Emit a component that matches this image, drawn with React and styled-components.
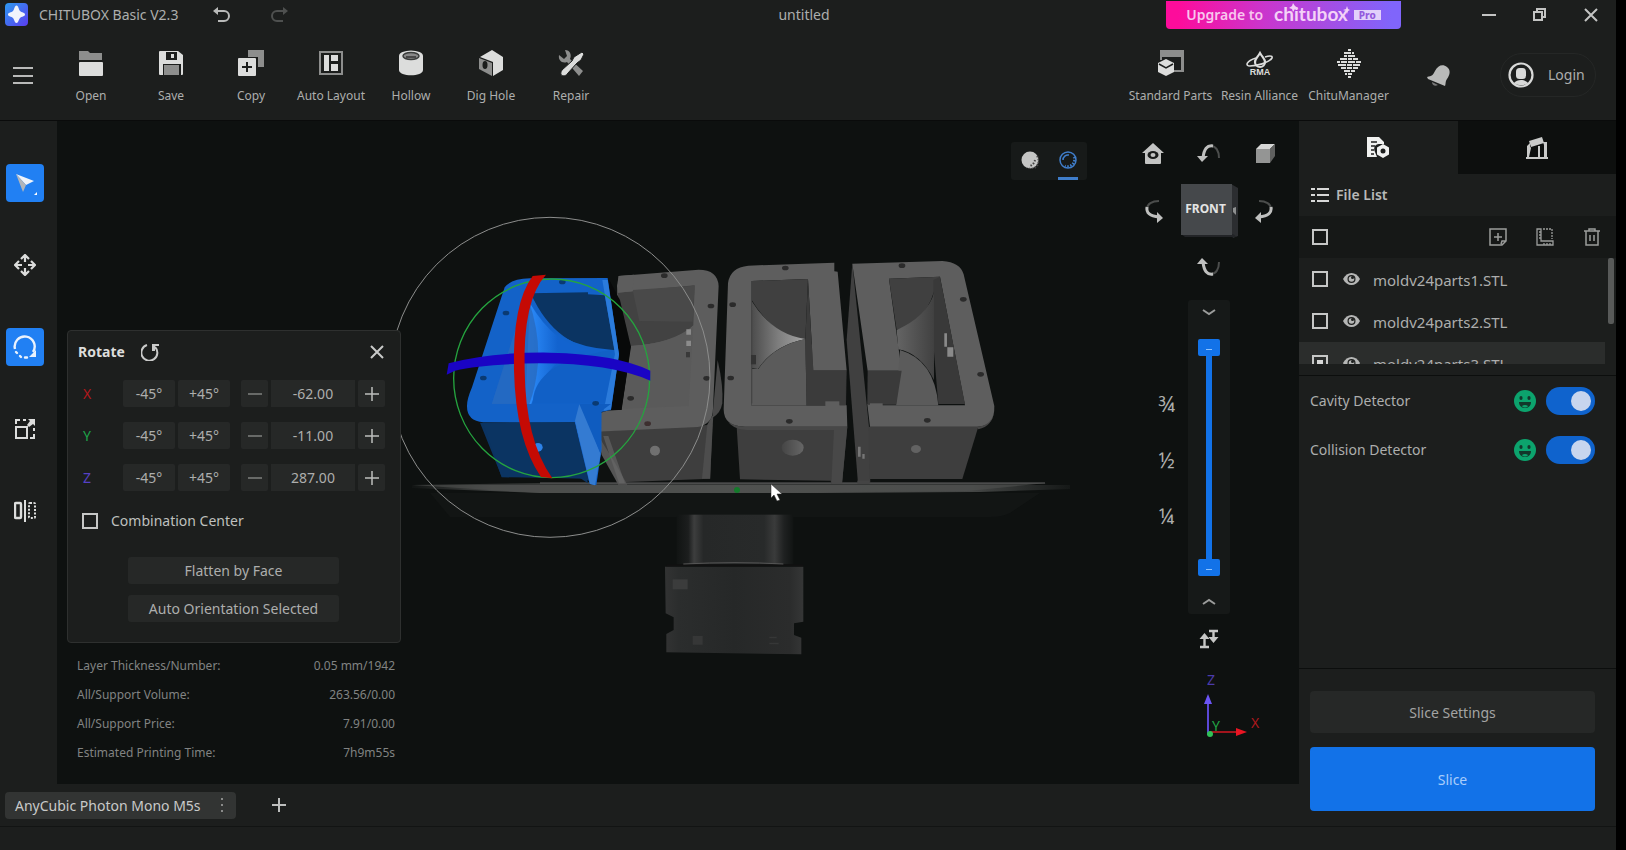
import React, { useState } from "react";
import styled, { createGlobalStyle, css } from "styled-components";

const GlobalStyle = createGlobalStyle`
  *, *::before, *::after { box-sizing: border-box; }
  body { margin: 0; background: #000; }
  body, button, input { font-family: "Noto Sans", "Open Sans", sans-serif; }
  button { border: 0; padding: 0; margin: 0; background: none; color: inherit; cursor: pointer; }
  ul, dl, dd, h2, h3, p { margin: 0; padding: 0; list-style: none; }
  svg { display: block; flex: none; }
`;

const c = {
  panel: "#1c1e1d",
  dark: "#0e1110",
  control: "#262827",
  text: "#adaead",
  bright: "#d4d5d4",
  blue: "#1272e8",
};

const Frame = styled.div`
  min-height: 100vh;
  padding-right: 10px;
  display: flex;
`;

const Window = styled.div`
  flex: 1;
  min-width: 0;
  display: flex;
  flex-direction: column;
  background: ${c.panel};
  color: ${c.text};
  font-size: 14px;
  line-height: 20px;
`;

const TitleBar = styled.header`
  height: 29px;
  display: grid;
  grid-template-columns: minmax(0, 1fr) auto minmax(0, 1fr);
  align-items: center;
`;

const TitleLeft = styled.div`
  display: flex;
  align-items: center;
  padding-left: 5px;
`;

const AppName = styled.span`
  margin-left: 11px;
  width: 173px;
  white-space: nowrap;
`;

const HistoryButton = styled.button`
  width: 20px;
  height: 20px;
  margin-right: 37px;
  color: ${(p) => (p.disabled ? "#4e504f" : "#b9bab9")};
`;

const DocTitle = styled.span`
  padding-right: 8px;
`;

const TitleRight = styled.div`
  display: flex;
  align-items: center;
  justify-content: flex-end;
`;

const Upgrade = styled.a`
  width: 235px;
  height: 28px;
  margin-right: 62px;
  border-radius: 0 0 4px 4px;
  background: linear-gradient(90deg, #fd0c9b 5%, #c936cd 42%, #8065fb 96%);
  display: flex;
  align-items: center;
  justify-content: center;
  gap: 11px;
  color: #f8c6ee;
  font-weight: 600;
  text-decoration: none;
`;

const Brand = styled.span`
  position: relative;
  display: flex;
  align-items: center;
  gap: 6px;
  color: #f4d2f7;
  font: 700 19px/20px Lato, sans-serif;
  padding-bottom: 2px;
`;

const Sparkles = styled.svg`
  position: absolute;
  left: 0;
  top: -1px;
`;

const ProBadge = styled.span`
  width: 27px;
  height: 10px;
  margin-top: 3px;
  background: #e2d0fb;
  color: #9459de;
  font: 800 10px/10px "Noto Sans", sans-serif;
  text-align: center;
`;

const WindowButton = styled.button`
  width: 51px;
  height: 28px;
  display: grid;
  place-items: center;
  color: #c3c4c3;
`;

const ToolBar = styled.nav`
  height: 92px;
  display: flex;
  align-items: center;
  padding-right: 20px;
  border-bottom: 1px solid #0a0b0b;
`;

const MenuButton = styled.button`
  width: 22px;
  height: 22px;
  margin: 0 17px 0 12px;
  color: #b9bab9;
`;

const ToolButton = styled.button`
  width: ${(p) => (p.$wide ? 89 : 80)}px;
  padding-top: 5px;
  display: flex;
  flex-direction: column;
  align-items: center;
  gap: 11px;
  font-size: 12px;
  line-height: 18px;
  white-space: nowrap;
`;

const Spacer = styled.div`
  flex: 1;
`;

const BellButton = styled.button`
  width: 28px;
  height: 28px;
  margin: 0 48px 0 31px;
`;

const LoginButton = styled.button`
  width: 96px;
  height: 44px;
  border: 1px solid #252726;
  border-radius: 22px;
  display: flex;
  align-items: center;
  gap: 14px;
  padding-left: 7px;
  font-size: 14px;
`;

const Body = styled.div`
  flex: 1;
  display: grid;
  grid-template-columns: minmax(0, 1fr) 317px;
`;

const Main = styled.main`
  display: flex;
  flex-direction: column;
`;

const Workspace = styled.div`
  flex: 1;
  display: flex;
`;

const SideBar = styled.nav`
  width: 57px;
  padding: 43px 0 0 6px;
  display: flex;
  flex-direction: column;
  gap: 44px;
`;

const SideButton = styled.button`
  width: 38px;
  height: 38px;
  border-radius: 4px;
  display: grid;
  place-items: center;
  color: #dcdddc;
  background: ${(p) => (p.$active ? "#2180f3" : "transparent")};
`;

const Viewport = styled.section`
  position: relative;
  flex: 1;
  min-width: 0;
  min-height: 663px;
  background: ${c.dark};
`;

const Scene = styled.svg`
  position: absolute;
  inset: 0;
  width: 100%;
  height: 100%;
`;

const RotatePanel = styled.form`
  position: absolute;
  left: 10px;
  bottom: 141px;
  width: 334px;
  height: 313px;
  padding: 10px 13px 0 10px;
  border: 1px solid #2e302f;
  border-radius: 4px;
  background: ${c.panel};
`;

const PanelHead = styled.div`
  display: flex;
  align-items: center;
  height: 22px;
  margin-bottom: 17px;
  color: #dcdddc;
`;

const PanelTitle = styled.h2`
  width: 62px;
  font-size: 14px;
  line-height: 20px;
  font-weight: 700;
`;

const IconButton = styled.button`
  display: grid;
  place-items: center;
  width: 20px;
  height: 20px;
  color: ${(p) => p.$color || "#c9cac9"};
`;

const AxisRow = styled.div`
  display: grid;
  grid-template-columns: 42px 52px 52px auto;
  column-gap: 3px;
  height: 27px;
  margin-bottom: 15px;
  align-items: stretch;
`;

const AxisLabel = styled.label`
  padding-left: 5px;
  line-height: 27px;
  font-size: 14px;
  color: ${(p) => p.$color};
`;

const StepButton = styled.button`
  border-radius: 2px;
  background: ${c.control};
  font-size: 14px;
  display: grid;
  place-items: center;
`;

const Stepper = styled.div`
  margin-left: 8px;
  display: grid;
  grid-template-columns: 27px 84px 27px;
  column-gap: 3px;
`;

const ValueInput = styled.input`
  width: 100%;
  border: 0;
  padding: 0;
  background: ${c.control};
  color: ${c.text};
  font-size: 14px;
  text-align: center;
`;

const CheckLabel = styled.label`
  display: flex;
  align-items: center;
  gap: 13px;
  margin: 20px 0 26px 4px;
  height: 20px;
  color: #bfc0bf;
`;

const Check = styled.input.attrs({ type: "checkbox" })`
  appearance: none;
  flex: none;
  width: 16px;
  height: 16px;
  margin: 0;
  border: 2px solid #c6c7c6;
  display: grid;
  place-items: center;

  &:checked::before {
    content: "";
    width: 6px;
    height: 6px;
    background: #d8d9d8;
  }
`;

const PanelButton = styled.button`
  display: block;
  width: 211px;
  height: 27px;
  margin: 0 0 11px 50px;
  border-radius: 3px;
  background: ${c.control};
  font-size: 14px;
`;

const Stats = styled.dl`
  position: absolute;
  left: 20px;
  bottom: 17px;
  width: 318px;
`;

const Stat = styled.div`
  display: flex;
  justify-content: space-between;
  height: 29px;
  font-size: 12px;
  line-height: 29px;
  color: #818382;
`;

const ShadeToggle = styled.div`
  position: absolute;
  right: 212px;
  top: 21px;
  width: 76px;
  height: 38px;
  border-radius: 3px;
  background: #171a19;
  display: flex;
`;

const ShadeButton = styled.button`
  flex: 1;
  display: grid;
  place-items: center;
  border-bottom: 3px solid transparent;
  ${(p) =>
    p.$active &&
    css`
      background: linear-gradient(#3f7dca, #3f7dca) center bottom / 20px 3px no-repeat border-box;
    `}
`;

const ViewControls = styled.div`
  position: absolute;
  right: 18px;
  top: 17px;
  display: grid;
  grid-template-columns: 32px 80px 32px;
  grid-template-rows: 32px 82px 28px;
  place-items: center;
`;

const ViewButton = styled.button`
  width: 24px;
  height: 24px;
`;

const FrontCube = styled.button`
  position: relative;
  width: 57px;
  height: 54px;
`;

const CubeText = styled.span`
  position: absolute;
  left: 0;
  top: 15px;
  width: 50px;
  color: #e3e4e3;
  font: 700 12px/20px "Noto Sans", sans-serif;
  text-align: center;
`;

const LayerSlider = styled.div`
  position: absolute;
  right: 69px;
  top: 179px;
  width: 42px;
  height: 314px;
  border-radius: 3px;
  background: #161918;
  display: flex;
  flex-direction: column;
  align-items: center;
  justify-content: space-between;
`;

const ChevronButton = styled.button`
  width: 24px;
  height: 24px;
  display: grid;
  place-items: center;
`;

const Track = styled.div`
  position: relative;
  width: 22px;
  height: 237px;
  background: linear-gradient(${c.blue}, ${c.blue}) center / 6px 100% no-repeat;
`;

const thumb = css`
  appearance: none;
  width: 22px;
  height: 17px;
  border: 0;
  border-radius: 2px;
  background: linear-gradient(#8fc3ff, #8fc3ff) center 10px / 6px 1px no-repeat, ${c.blue};
  pointer-events: auto;
`;

const Range = styled.input.attrs({ type: "range" })`
  position: absolute;
  inset: 0;
  appearance: none;
  width: 22px;
  height: 237px;
  margin: 0;
  background: transparent;
  writing-mode: vertical-lr;
  direction: rtl;
  pointer-events: none;

  &::-webkit-slider-thumb { ${thumb} }
`;

const Fractions = styled.div`
  position: absolute;
  right: 124px;
  top: 271px;
  display: flex;
  flex-direction: column;
  gap: 32px;
  font-size: 21px;
  line-height: 24px;
`;

const SplitButton = styled.button`
  position: absolute;
  right: 80px;
  top: 508px;
  width: 20px;
  height: 20px;
`;

const AxisGizmo = styled.svg`
  position: absolute;
  right: 32px;
  top: 548px;
  font: 14px "Noto Sans", sans-serif;
`;

const TabBar = styled.div`
  height: 42px;
  padding-left: 5px;
  display: flex;
  align-items: center;
  gap: 33px;
`;

const PrinterTab = styled.button`
  width: 231px;
  height: 27px;
  padding: 0 12px 0 10px;
  border-radius: 4px;
  background: #323433;
  color: #c9cac9;
  font-size: 14px;
  display: flex;
  align-items: center;
  justify-content: space-between;
`;

const StatusBar = styled.footer`
  height: 24px;
  border-top: 1px solid #121413;
`;

const Side = styled.aside`
  display: flex;
  flex-direction: column;
  min-width: 0;
`;

const SideTabs = styled.div`
  display: grid;
  grid-template-columns: 1fr 1fr;
  height: 53px;
`;

const SideTab = styled.button`
  display: grid;
  place-items: center;
  background: ${(p) => (p.$active ? c.panel : "#0d0f0e")};
`;

const ListHead = styled.div`
  height: 42px;
  padding-left: 12px;
  display: flex;
  align-items: center;
  gap: 7px;
`;

const ListTitle = styled.h3`
  font-size: 14px;
  font-weight: 600;
  color: #b8b9b8;
`;

const ListTools = styled.div`
  height: 42px;
  padding: 0 14px 0 13px;
  background: #161817;
  display: flex;
  align-items: center;
  gap: 27px;
`;

const FileArea = styled.div`
  height: 106px;
  overflow: hidden;
  display: flex;
  gap: 3px;
  padding-right: 2px;
`;

const FileRows = styled.ul`
  flex: 1;
`;

const FileRow = styled.li`
  height: 42px;
  padding-left: 13px;
  display: flex;
  align-items: center;
  gap: 15px;
  background: ${(p) => (p.$selected ? "#2b2d2c" : "transparent")};
`;

const FileName = styled.label`
  margin-left: -2px;
  padding-top: 2px;
  font-size: 15px;
`;

const ScrollThumb = styled.div`
  width: 6px;
  height: 66px;
  border-radius: 2px;
  background: #585a59;
`;

const Detectors = styled.div`
  flex: 1;
  margin-top: 11px;
  padding: 11px 21px 0 11px;
  border-top: 1px solid #0c0e0d;
`;

const Detector = styled.div`
  height: 28px;
  margin-bottom: 21px;
  display: flex;
  align-items: center;
  gap: 10px;
`;

const DetectorLabel = styled.label`
  flex: 1;
`;

const Switch = styled.input.attrs({ type: "checkbox", role: "switch" })`
  appearance: none;
  width: 49px;
  height: 28px;
  margin: 0;
  padding: 0 4px;
  border-radius: 14px;
  background: #0f63cd;
  display: flex;
  align-items: center;

  &::before {
    content: "";
    width: 20px;
    height: 20px;
    border-radius: 50%;
    background: #c7d5ee;
  }
  &:checked { justify-content: flex-end; }
`;

const Actions = styled.div`
  height: 158px;
  padding: 22px 21px 0 11px;
  border-top: 1px solid #0c0e0d;
  display: flex;
  flex-direction: column;
  gap: 14px;
`;

const ActionButton = styled.button`
  height: ${(p) => (p.$primary ? 64 : 42)}px;
  border-radius: 4px;
  background: ${(p) => (p.$primary ? c.blue : c.control)};
  color: ${(p) => (p.$primary ? "#a9cdfb" : "#a3a4a3")};
  font-size: 14px;
`;

const L = "#dcdddc";
const G = "#8d8e8d";

const toolIcons = {
  Open: (
    <>
      <path d="M1 1h9l2 2h12v7H1z" fill={G} />
      <rect x="1" y="12" width="24" height="14" rx="1" fill={L} />
    </>
  ),
  Save: (
    <>
      <path d="M2 1h18l5 4v19a1 1 0 0 1-1 1h-1V14H5v11H2a1 1 0 0 1-1-1V2a1 1 0 0 1 1-1zM8 2v8h11V2z" fill={L} fillRule="evenodd" />
      <rect x="9" y="3" width="9" height="6" fill="#1c1e1d" />
      <rect x="13" y="4" width="3" height="4" fill={L} />
      <rect x="6" y="15" width="15" height="10" fill={G} />
    </>
  ),
  Copy: (
    <>
      <path d="M10 0h16v17h-6V7H10z" fill={G} />
      <rect x="0" y="8" width="18" height="18" rx="1" fill={L} />
      <path d="M9 12v10M4 17h10" stroke="#1c1e1d" strokeWidth="2" />
    </>
  ),
  "Auto Layout": (
    <>
      <rect x="2" y="2" width="22" height="22" fill="none" stroke={G} strokeWidth="2" />
      <path d="M6 5h5v16H6zM13 5h7v6h-7zM13 14h7v7h-7z" fill={L} />
    </>
  ),
  Hollow: (
    <>
      <path d="M1 6v14c0 7 24 7 24 0V6z" fill={L} />
      <ellipse cx="13" cy="6" rx="12" ry="5.5" fill={L} />
      <ellipse cx="13" cy="6" rx="8" ry="3.5" fill="#888" stroke="#3a3c3b" strokeWidth="1.5" />
      <path d="M8 7h10" stroke="#333" strokeWidth="1.5" />
    </>
  ),
  "Dig Hole": (
    <>
      <path d="M2 7l12-7 11 7v13l-10 6V12z" fill={L} />
      <path d="M1 8l13 5v13L1 19z" fill={G} />
      <ellipse cx="7" cy="15" rx="2.5" ry="4" fill="#1c1e1d" />
    </>
  ),
  Repair: (
    <>
      <path d="M7 0C12 0 14 5 12 9l13 12-4 5L9 12C4 14 0 10 1 5l5 4 3-3z" fill={G} />
      <path d="M24 2l2 2-3 6-4 3-9 10c-3 5-10 3-6-3l10-9 2-4z" fill={L} stroke="#1c1e1d" />
    </>
  ),
  "Standard Parts": (
    <>
      <path d="M2 0h24v22H15v-2h8V7H4v3H2z" fill={G} />
      <path d="M8 9l8 4v9l-8 4-8-4v-9z" fill={L} />
      <path d="M1 14l7 4 7-4" fill="none" stroke="#1c1e1d" strokeWidth="1.5" />
    </>
  ),
  "Resin Alliance": (
    <>
      <path d="M13 3C10 8 8 9 8 12a5 5 0 0 0 10 0c0-3-2-4-5-9z" fill="none" stroke={L} strokeWidth="2.2" />
      <path d="M9 8C-1 11-2 16 3 16c6 0 19-3 22-8 1-3-4-2-7-1" fill="none" stroke={L} strokeWidth="1.6" />
      <text x="13" y="25" textAnchor="middle" fontSize="9" fontWeight="900" fontFamily="Liberation Sans, sans-serif" fill={L}>RMA</text>
    </>
  ),
  ChituManager: (
    <path
      d="M12 0h3M8 3h7M16 3h2M8 6h3M12 6h7M4 9h7M12 9h4M17 9h5M1 12h3M5 12h6M12 12h7M20 12h5M2 15h8M11 15h5M17 15h7M5 18h5M11 18h5M17 18h5M8 21h6M15 21h4M9 24h2M12 24h4M12 27h3"
      stroke={L}
      strokeWidth="2"
    />
  ),
};

const ToolIcon = ({ name }) => (
  <svg width="26" height="26" viewBox="0 0 26 26" overflow="visible" aria-hidden="true">
    {toolIcons[name]}
  </svg>
);

const Tool = ({ name, wide }) => (
  <ToolButton type="button" $wide={wide}>
    <ToolIcon name={name} />
    {name}
  </ToolButton>
);

const UndoIcon = ({ flip }) => (
  <svg width="20" height="20" viewBox="0 0 20 20">
    <g transform={flip ? "translate(20 0) scale(-1 1)" : undefined}>
      <path d="M4 6h8a5 5 0 0 1 0 10H6" fill="none" stroke="currentColor" strokeWidth="2" />
      <path d="M1 6l5-4v8z" fill="currentColor" />
    </g>
  </svg>
);

const Cross = ({ size = 14 }) => (
  <svg width={size} height={size} viewBox="0 0 14 14">
    <path d="M1 1l12 12M13 1L1 13" stroke="currentColor" strokeWidth="2" />
  </svg>
);

const Plus = ({ width = 2 }) => (
  <svg width="14" height="14" viewBox="0 0 14 14">
    <path d="M7 0v14M0 7h14" stroke="#bdbebd" strokeWidth={width} />
  </svg>
);

const sideIcons = [
  ["Select", true, (
    <svg width="28" height="28" viewBox="0 0 28 28" key="i">
      <path d="M5 5l18 7-8 4z" fill="#eef3fa" />
      <path d="M5 5l10 11-3 7z" fill="#b1b5ba" />
      <path d="M26 23v3h-3z" fill="#fff" />
    </svg>
  )],
  ["Move", false, (
    <svg width="22" height="22" viewBox="0 0 22 22" key="i">
      <path
        d="M7 5l4-4 4 4M7 17l4 4 4-4M5 7l-4 4 4 4M17 7l4 4-4 4M11 2v6M11 14v6M2 11h6M14 11h6"
        fill="none"
        stroke="currentColor"
        strokeWidth="2.2"
      />
    </svg>
  )],
  ["Rotate", true, (
    <svg width="24" height="24" viewBox="0 0 24 24" key="i">
      <path d="M2 14A10 10 0 1 1 20 17" fill="none" stroke="#eaf2fd" strokeWidth="2.400" />
      <path d="M3 17l1 1M7 21l1 1M12 22.500h2" stroke="#eaf2fd" strokeWidth="2.400" strokeLinecap="round" />
      <path d="M16 15l6 8M23 15v7h-7z" fill="#eaf2fd" />
    </svg>
  )],
  ["Scale", false, (
    <svg width="20" height="20" viewBox="0 0 20 20" key="i">
      <rect x="1" y="8" width="11" height="11" fill="none" stroke="currentColor" strokeWidth="2" />
      <path d="M1 5V1h4M8 1h3M19 9v3M19 15v4h-4" fill="none" stroke="currentColor" strokeWidth="2" />
      <path d="M13 0h7v7l-2-2-4 3-2-2 3-4z" fill="currentColor" />
    </svg>
  )],
  ["Mirror", false, (
    <svg width="22" height="22" viewBox="0 0 22 22" key="i">
      <rect x="1" y="3" width="6" height="15" rx="1" fill="none" stroke="currentColor" strokeWidth="2.400" />
      <path d="M11 0v22" stroke="currentColor" strokeWidth="2" />
      <rect x="15" y="3" width="6" height="15" rx="1" fill="none" stroke="currentColor" strokeWidth="2" strokeDasharray="2 1.500" />
    </svg>
  )],
];

const Eye = () => (
  <svg width="17" height="12" viewBox="0 0 17 12" aria-hidden="true">
    <path d="M0 6C4-2 13-2 17 6 13 14 4 14 0 6z" fill="#b5b6b5" />
    <circle cx="8.500" cy="6" r="4" fill="#1c1e1d" />
    <circle cx="8.500" cy="6" r="2.800" fill="#b5b6b5" />
    <circle cx="9.500" cy="4.500" r="1.500" fill="#1c1e1d" />
  </svg>
);

const Smile = () => (
  <svg width="22" height="22" viewBox="0 0 22 22" aria-hidden="true">
    <circle cx="11" cy="11" r="11" fill="#0ca36d" />
    <ellipse cx="7" cy="8" rx="1.600" ry="2" fill="#12382b" />
    <ellipse cx="15" cy="8" rx="1.600" ry="2" fill="#12382b" />
    <path d="M5 12h12c0 8-12 8-12 0z" fill="#12382b" />
    <path d="M8 16c2-1.500 4-1.500 6 0-1 2-5 2-6 0z" fill="#0ca36d" />
  </svg>
);

/* Arrow that curls over the top of the cube; the other three are turned copies. */
const CurlArrow = ({ t }) => (
  <svg width="24" height="24" viewBox="0 0 24 24">
    <g transform={t}>
      <path d="M14 4c5 0 8 5 8 12" fill="none" stroke="#4b4d4c" strokeWidth="2" />
      <path d="M6 16C7 7 10 3 16 4" fill="none" stroke="#bfc0bf" strokeWidth="3" />
      <path d="M0 14h11l-6 6z" fill="#bfc0bf" />
    </g>
  </svg>
);

const Chevron = ({ up }) => (
  <svg width="14" height="8" viewBox="0 0 14 8">
    <path d={up ? "M1 6l6-4 6 4" : "M1 2l6 4 6-4"} fill="none" stroke="#9b9c9b" strokeWidth="2" />
  </svg>
);

const Hole = ({ x, y, f = "#2b2b2b" }) => <ellipse cx={x} cy={y} rx="10" ry="7" fill={f} />;

const SceneArt = () => (
  <Scene viewBox="57 121 1242 663" role="img" aria-label="Build plate with four mold parts">
    <defs>
      <linearGradient id="plate" x1="0" x2="1">
        <stop offset="0" stopColor="#111413" />
        <stop offset=".12" stopColor="#444645" />
        <stop offset=".5" stopColor="#505150" />
        <stop offset=".85" stopColor="#454746" />
        <stop offset="1" stopColor="#151817" />
      </linearGradient>
      <linearGradient id="neck" x1="0" x2="1">
        <stop offset="0" stopColor="#111413" />
        <stop offset=".1" stopColor="#1c1e1e" />
        <stop offset=".15" stopColor="#3d3e3e" />
        <stop offset=".23" stopColor="#262828" />
        <stop offset=".75" stopColor="#282a2a" />
        <stop offset=".84" stopColor="#3a3b3b" />
        <stop offset=".92" stopColor="#1f2121" />
        <stop offset="1" stopColor="#111413" />
      </linearGradient>
      <linearGradient id="base" x1="0" x2="1">
        <stop offset="0" stopColor="#323333" />
        <stop offset=".1" stopColor="#2b2d2d" />
        <stop offset=".5" stopColor="#262828" />
        <stop offset=".9" stopColor="#2b2c2c" />
        <stop offset="1" stopColor="#353636" />
      </linearGradient>
      <linearGradient id="cone" x1="0" x2="1">
        <stop offset="0" stopColor="#4c4c4c" />
        <stop offset=".5" stopColor="#7e7e7e" />
        <stop offset="1" stopColor="#a5a5a5" />
      </linearGradient>
      <linearGradient id="cone2" x1="0" x2="1">
        <stop offset="0" stopColor="#646464" />
        <stop offset="1" stopColor="#414141" />
      </linearGradient>
      <linearGradient id="coneBlue" x1="0" x2="1">
        <stop offset="0" stopColor="#2f90ff" />
        <stop offset=".5" stopColor="#1263cf" />
      </linearGradient>
      <linearGradient id="dip" x1="0" x2="1">
        <stop offset="0" stopColor="#454545" />
        <stop offset="1" stopColor="#666" />
      </linearGradient>
    </defs>

    {/* build plate and its mount */}
    <path d="M430 493h610l-30 20q-8 4-20 4H450z" fill="#121514" />
    <path d="M412 485h646l12 0v4l-90 3-160 1H540l-128-5z" fill="url(#plate)" />
    <path d="M412 485l130-2h505l-80 8-250 2H540z" fill="#505150" opacity=".6" />
    <path d="M540 483h505" stroke="#626362" />
    <g transform="translate(630 470) scale(.3333)">
      <rect x="140" y="134" width="350" height="150" fill="url(#neck)" />
      <path d="M105 290h415v165l-28 5v35l22 8v50l-405-6v-55l22-12v-38l-24-12z" fill="url(#base)" />
      <path d="M110 286h410" stroke="#111" strokeWidth="6" />
      <path d="M160 282q160-8 300 0" stroke="#555" strokeWidth="3" fill="none" />
      <path d="M128 328h45v30h-45z" fill="#3b3c3c" />
      <path d="M188 498h30v26h-30zM418 500h22v5h-22zM418 518h28v5h-28z" fill="#363737" />
    </g>

    {/* two parts on the right */}
    <g transform="translate(700 230) scale(.3333)">
      <path d="M110 590h332l-16 172h-32l-2-10-272-4z" fill="#3e3e3e" />
      <path d="M402 600l40-10-16 172h-32z" fill="#484848" />
      <path d="M316 330l124 90-2 110-118-2z" fill="#383838" />
      <path
        fillRule="evenodd"
        d="M145 107l258-9v26l10 1 27 296H340L324 147l-169 6v374h223v-13h42v12h20l2 64H135q-64 0-64-52L84 160q6-48 61-53z"
        fill="#5e5e5e"
      />
      <path d="M78 566q20 34 62 34h300v-10H135q-46-2-57-24z" fill="#484848" />
      <path d="M155 153l169-6-8 182q-96-10-161-119z" fill="#404040" />
      <path d="M155 213q62 100 161 114-96 20-142 90l-19-2z" fill="url(#cone)" />
      <path d="M175 417q46-70 141-90l4 200H155V417z" fill="#5b5b5b" />
      <path d="M316 330l8-180 16 272h99l-3 104H320z" fill="#3b3b3b" />
      <path d="M155 240v280" stroke="#454545" strokeWidth="4" />
      <rect x="153" y="375" width="15" height="28" fill="#333" />
      <path d="M376 514h42v14h-42z" fill="#5e5e5e" />
      <Hole x={256} y={114} /><Hole x={98} y={224} /><Hole x={92} y={444} /><Hole x={268} y={574} />
      <ellipse cx="278" cy="653" rx="33" ry="24" fill="url(#dip)" />

      <path d="M457 100l50 490 4 170h-37L440 330z" fill="#404040" />
      <path d="M505 590h330l-48 157H508z" fill="#3e3e3e" />
      <path
        fillRule="evenodd"
        d="M457 101l270-8q54 4 64 40l92 395q2 62-50 62H510l-8-68h45v4h248L720 140l-153 6 38 276H503z"
        fill="#5e5e5e"
      />
      <path d="M567 146l153-6-12 20q-20 110-118 140z" fill="#404040" />
      <path d="M700 150l20-10 75 382h-80l-15-180z" fill="#393939" />
      <path d="M590 300q90-40 112-110v260q-40-80-107-92z" fill="url(#cone2)" />
      <path d="M600 360q104 30 115 166H588z" fill="#5b5b5b" />
      <path d="M503 422h102l-16 102H502z" fill="#3a3a3a" />
      <path d="M510 520h38v8h-38z" fill="#5e5e5e" />
      <path d="M835 598q44-8 48-60-4 50-52 52z" fill="#454545" />
      <Hole x={606} y={107} /><Hole x={790} y={208} /><Hole x={842} y={433} /><Hole x={682} y={571} />
      <ellipse cx="648" cy="657" rx="15" ry="12" fill="#626262" />
      <path d="M733 310h8v40h-8zM742 352h18v28h-18z" fill="#8a8a8a" />
      <path d="M474 650h8v30h-8zM487 672h7v14h-7z" fill="#777" />
      <path d="M472 752h36v10h-36z" fill="#444" />
    </g>

    {/* selected part and its neighbour */}
    <g transform="translate(390 200) scale(.3333)">
      <path d="M983 480q18 80 14 130-5 30-30 44z" fill="#494949" />
      <path d="M617 694l350-20-6 162-250 10-26 8z" fill="#3e3e3e" />
      <path d="M965 650l5-4-10 190-24 0 16-162z" fill="#4d4d4d" />
      <path d="M686 228l240-19q58 0 60 50l-17 367q0 46-46 55l-307 14 4-45q10-22 75-20l28-190-43-140z" fill="#5d5d5d" />
      <path d="M683 278l45-4 186-18-4 120q-50 54-188 62l-26-90z" fill="#424242" />
      <path d="M728 270l186-13-6 108-160-2z" fill="#494949" />
      <path d="M683 278l-2-20 5-30 46-4-4 50z" fill="#5d5d5d" />
      <path d="M722 438q120-6 188-60l-14 240-198 8z" fill="#5a5a5a" />
      <path d="M620 700l50 80 42 74h-27l-50-90z" fill="#555" />
      <path d="M640 708h15l50 142h-18z" fill="#6a6a6a" opacity=".6" />
      <path d="M889 388h14v16h-14zM889 422h14v16h-14z" fill="#8c8c8c" />
      <path d="M888 456h12v16h-12z" fill="#393939" />
      <Hole x={823} y={227} /><Hole x={963} y={318} /><Hole x={950} y={535} /><Hole x={773} y={671} f="#3d2f2f" /><Hole x={722} y={595} />
      <circle cx="795" cy="752" r="15" fill="#707070" />

      <path d="M658 240l32 60 33 140-29 190h-40z" fill="#080909" />
      <path d="M270 668l290-5 50 185-28-12-247-6z" fill="#0b3361" />
      <path d="M420 235l233-1 34 230-24 166-30 6 2 110-16 110-20-5-45-184H280q-50-4-49-50 0-20 15-55l98-300q20-26 76-27z" fill="#1362c8" />
      <path d="M280 670l274-4 40 184-24-16-235-2z" fill="#0b3462" />
      <path d="M424 280l170-3v6l50 3 30 164q-170 10-252-170z" fill="#0b3462" />
      <path d="M426 310q60 130 244 140l-10 160H305l55-160q30-60 55-160z" fill="#1263cc" />
      <path d="M420 310q76 130 180 138-130 20-176 164h-18z" fill="url(#coneBlue)" />
      <path d="M376 390l40-90q34 100 28 190-6 70-26 122H305z" fill="#286abf" opacity=".8" />
      <path d="M430 590q20-110 240-140l-15 160H430z" fill="#1160c6" />
      <path d="M637 240h16l34 222-24 166-22 4 34-170z" fill="#2b7bdb" />
      <path d="M568 612l10 10 54 140-17 94-15-4-45-190z" fill="#347bd2" />
      <path d="M568 612h95l-28 20-3 130z" fill="#0f5cc0" />
      <Hole x={348} y={339} f="#0a3a72" /><Hole x={280} y={534} f="#0a3a72" /><Hole x={517} y={246} f="#0a3a72" /><Hole x={617} y={610} f="#0a3a72" />
      <ellipse cx="444" cy="742" rx="14" ry="13" fill="#2d82e8" />

      <circle cx="480" cy="532" r="480" fill="none" stroke="#8d8e8d" strokeWidth="3" />
      <ellipse cx="485" cy="535" rx="294" ry="298" fill="none" stroke="#25a43f" strokeWidth="4" />
      <path d="M170 524l6-34q124-34 304-32 200 4 301 54v30q-120-52-331-52-170 2-255 22z" fill="#1a04c4" />
      <path d="M468 224q-70 76-64 286 2 210 83 325l-34-4q-76-110-81-321-5-200 56-282z" fill="#c50a04" />
    </g>

    <circle cx="737" cy="490" r="3" fill="#147a2b" />
    <path d="M771 484v14l3-3 3 6 3-1-3-6h5z" fill="#fff" stroke="#222" strokeWidth=".5" />
  </Scene>
);

const axes = [
  { name: "X", color: "#b3181c", value: "-62.00" },
  { name: "Y", color: "#1da349", value: "-11.00" },
  { name: "Z", color: "#5641c4", value: "287.00" },
];

const stats = [
  ["Layer Thickness/Number:", "0.05 mm/1942"],
  ["All/Support Volume:", "263.56/0.00"],
  ["All/Support Price:", "7.91/0.00"],
  ["Estimated Printing Time:", "7h9m55s"],
];

const files = ["moldv24parts1.STL", "moldv24parts2.STL", "moldv24parts3.STL"];

const Axis = ({ name, color, value }) => {
  const [v, setV] = useState(value);
  const step = (d) => setV((Number(v) + d).toFixed(2));
  return (
    <AxisRow>
      <AxisLabel htmlFor={`rot-${name}`} $color={color}>{name}</AxisLabel>
      <StepButton type="button" onClick={() => step(-45)}>-45°</StepButton>
      <StepButton type="button" onClick={() => step(45)}>+45°</StepButton>
      <Stepper>
        <StepButton type="button" aria-label={`Decrease ${name}`} onClick={() => step(-1)}>
          <svg width="14" height="14" viewBox="0 0 14 14"><path d="M0 7h14" stroke="#7f807f" strokeWidth="1.500" /></svg>
        </StepButton>
        <ValueInput id={`rot-${name}`} type="text" value={v} onChange={(e) => setV(e.target.value)} />
        <StepButton type="button" aria-label={`Increase ${name}`} onClick={() => step(1)}>
          <Plus width={1.5} />
        </StepButton>
      </Stepper>
    </AxisRow>
  );
};

export default function App() {
  return (
    <Frame>
      <GlobalStyle />
      <Window>
        <TitleBar>
          <TitleLeft>
            <svg width="23" height="23" viewBox="0 0 23 23" aria-hidden="true">
              <defs>
                <linearGradient id="logo" x1="0" y1="0" x2="1" y2="1">
                  <stop offset="0" stopColor="#2d9af0" />
                  <stop offset="1" stopColor="#5a3cf0" />
                </linearGradient>
              </defs>
              <rect width="23" height="23" rx="4" fill="url(#logo)" />
              <path d="M11.500 2.500c2 0 2 4 3.500 5.500s5 1.500 5 3.500-3.500 2-5 3.500-1.500 5-3.500 5-2-3.500-3.500-5-5-1.500-5-3.500S6.500 9.500 8 8s1.500-5.500 3.500-5.500z" fill="#f0f3fc" />
            </svg>
            <AppName>CHITUBOX Basic V2.3</AppName>
            <HistoryButton type="button" aria-label="Undo"><UndoIcon /></HistoryButton>
            <HistoryButton type="button" aria-label="Redo" disabled><UndoIcon flip /></HistoryButton>
          </TitleLeft>
          <DocTitle>untitled</DocTitle>
          <TitleRight>
            <Upgrade href="#upgrade">
              Upgrade to
              <Brand>
                chitubox
                <Sparkles width="76" height="14" viewBox="0 0 76 14" aria-hidden="true">
                  <path d="M19 0l2 3 3 2-3 1-2 3-1-3-3-1 3-2zM73 3l1 3 2 1-2 1-1 3-1-3-3-1 3-1z" fill="#f4d2f7" />
                </Sparkles>
                <ProBadge>Pro</ProBadge>
              </Brand>
            </Upgrade>
            <WindowButton type="button" aria-label="Minimize">
              <svg width="14" height="14" viewBox="0 0 14 14"><path d="M0 7h14" stroke="currentColor" strokeWidth="2" /></svg>
            </WindowButton>
            <WindowButton type="button" aria-label="Restore">
              <svg width="13" height="13" viewBox="0 0 13 13" fill="none" stroke="currentColor" strokeWidth="2">
                <path d="M1 4h8v8H1zM4 4V1h8v8H9" />
              </svg>
            </WindowButton>
            <WindowButton type="button" aria-label="Close"><Cross /></WindowButton>
          </TitleRight>
        </TitleBar>

        <ToolBar>
          <MenuButton type="button" aria-label="Menu">
            <svg width="22" height="22" viewBox="0 0 22 22"><path d="M1 4h20M1 12h20M1 19h20" stroke="currentColor" strokeWidth="2" /></svg>
          </MenuButton>
          {["Open", "Save", "Copy", "Auto Layout", "Hollow", "Dig Hole", "Repair"].map((n) => <Tool key={n} name={n} />)}
          <Spacer />
          {["Standard Parts", "Resin Alliance", "ChituManager"].map((n) => <Tool key={n} name={n} wide />)}
          <BellButton type="button" aria-label="Notifications">
            <svg width="28" height="28" viewBox="0 0 28 28">
              <path d="M3 16c5-1 6-2 8-6 3-6 8-7 12-4 4 3 3 8 0 12-2 3-1 5-2 7L4 18z" fill="#b9bab9" />
              <path d="M8 21l6 3c-3 2-6 0-6-3z" fill="#777" />
            </svg>
          </BellButton>
          <LoginButton type="button">
            <svg width="26" height="26" viewBox="0 0 26 26">
              <circle cx="13" cy="13" r="11.500" fill="none" stroke="#d8d9d8" strokeWidth="2.200" />
              <rect x="8" y="6" width="10" height="11" rx="3.500" fill="#d8d9d8" />
              <path d="M6 21c3-4 11-4 14 0-4 3-10 3-14 0z" fill="#d8d9d8" />
            </svg>
            Login
          </LoginButton>
        </ToolBar>

        <Body>
          <Main>
            <Workspace>
              <SideBar>
                {sideIcons.map(([name, active, icon]) => (
                  <SideButton key={name} type="button" aria-label={name} $active={active}>{icon}</SideButton>
                ))}
              </SideBar>
              <Viewport>
                <SceneArt />

                <Stats>
                  {stats.map(([k, v]) => (
                    <Stat key={k}><dt>{k}</dt><dd>{v}</dd></Stat>
                  ))}
                </Stats>

                <RotatePanel onSubmit={(e) => e.preventDefault()}>
                  <PanelHead>
                    <PanelTitle>Rotate</PanelTitle>
                    <IconButton type="button" aria-label="Reset rotation">
                      <svg width="18" height="18" viewBox="0 0 18 18">
                        <path d="M6 2a8 8 0 1 0 8 2" fill="none" stroke="currentColor" strokeWidth="2" />
                        <path d="M11 1h7v2h-4v5h-3z" fill="currentColor" />
                      </svg>
                    </IconButton>
                    <Spacer />
                    <IconButton type="button" aria-label="Close panel"><Cross /></IconButton>
                  </PanelHead>
                  {axes.map((a) => <Axis key={a.name} {...a} />)}
                  <CheckLabel><Check />Combination Center</CheckLabel>
                  <PanelButton type="button">Flatten by Face</PanelButton>
                  <PanelButton type="button">Auto Orientation Selected</PanelButton>
                </RotatePanel>

                <ShadeToggle>
                  <ShadeButton type="button" aria-label="Solid view">
                    <svg width="18" height="18" viewBox="0 0 18 18">
                      <circle cx="9" cy="9" r="8.500" fill="#c4c5c4" />
                      <path d="M16 5a8 8 0 0 1-10 12M14 9a8 8 0 0 1-5 6" fill="none" stroke="#444" strokeWidth="2" strokeDasharray="1.500 1.500" />
                    </svg>
                  </ShadeButton>
                  <ShadeButton type="button" aria-label="Reflective view" $active>
                    <svg width="18" height="18" viewBox="0 0 18 18">
                      <circle cx="9" cy="9" r="8" fill="none" stroke="#3f7dca" strokeWidth="1.500" />
                      <path d="M4 9a5 5 0 0 1 6-5" fill="none" stroke="#3f7dca" strokeWidth="1.500" />
                      <path d="M15 6a7 7 0 0 1-9 9" fill="none" stroke="#3f7dca" strokeWidth="2.500" strokeDasharray="1.500 1.500" />
                    </svg>
                  </ShadeButton>
                </ShadeToggle>

                <ViewControls>
                  <ViewButton type="button" aria-label="Home view">
                    <svg width="24" height="24" viewBox="0 0 24 24">
                      <path d="M12 1l11 10h-3v10a1 1 0 0 1-1 1H5a1 1 0 0 1-1-1V11H1z" fill="#c3c4c3" />
                      <ellipse cx="12" cy="13" rx="5.500" ry="4" fill="#1a1c1b" />
                      <ellipse cx="12" cy="13" rx="2.500" ry="2" fill="#c3c4c3" />
                    </svg>
                  </ViewButton>
                  <ViewButton type="button" aria-label="Tilt up"><CurlArrow /></ViewButton>
                  <ViewButton type="button" aria-label="Projection">
                    <svg width="24" height="24" viewBox="0 0 24 24">
                      <path d="M3 7l5-5h14l-5 5z" fill="#d6d7d6" />
                      <path d="M3 7h14v14H3z" fill="#949594" />
                      <path d="M17 7l5-5v12l-5 7z" fill="#5f605f" />
                    </svg>
                  </ViewButton>
                  <ViewButton type="button" aria-label="Turn left"><CurlArrow t="translate(0 24) rotate(-90) translate(0 2)" /></ViewButton>
                  <FrontCube type="button">
                    <svg width="57" height="54" viewBox="0 0 57 54">
                      <path d="M50 0l7 4v48l-5 2-2-4z" fill="#2b2d30" />
                      <path d="M0 50h52l4 3H4z" fill="#222427" />
                      <rect width="51" height="51" fill="#45484b" />
                      <path d="M52 24l3-1v8l-3-3z" fill="#8d8f90" />
                    </svg>
                    <CubeText>FRONT</CubeText>
                  </FrontCube>
                  <ViewButton type="button" aria-label="Turn right"><CurlArrow t="translate(24 24) scale(-1 1) rotate(-90) translate(0 2)" /></ViewButton>
                  <span />
                  <ViewButton type="button" aria-label="Tilt down"><CurlArrow t="translate(0 24) scale(1 -1)" /></ViewButton>
                </ViewControls>

                <Fractions><span>¾</span><span>½</span><span>¼</span></Fractions>
                <LayerSlider>
                  <ChevronButton type="button" aria-label="Layer down"><Chevron /></ChevronButton>
                  <Track>
                    <Range aria-label="Top layer" defaultValue={100} />
                    <Range aria-label="Bottom layer" defaultValue={0} />
                  </Track>
                  <ChevronButton type="button" aria-label="Layer up"><Chevron up /></ChevronButton>
                </LayerSlider>

                <SplitButton type="button" aria-label="Clip between layers">
                  <svg width="20" height="20" viewBox="0 0 20 20">
                    <path d="M1 18h9M5.500 18V8M10 2h9M14.500 2v8" stroke="#c6c7c6" strokeWidth="2.400" fill="none" />
                    <path d="M5.500 4l5 6h-10zM14.500 14l-5-6h10z" fill="#c6c7c6" />
                  </svg>
                </SplitButton>

                <AxisGizmo width="70" height="70" viewBox="0 0 70 70" aria-label="Axes">
                  <text x="10" y="16" fill="#4b3bab">Z</text>
                  <path d="M11 66V32" stroke="#5b48d6" strokeWidth="2" />
                  <path d="M11 25l4 10H7z" fill="#6b55f5" />
                  <path d="M13 63h28" stroke="#a1141c" strokeWidth="2" />
                  <path d="M50 63l-11-4v8z" fill="#ea1523" />
                  <text x="54" y="59" fill="#ad181d">X</text>
                  <text x="15" y="62" fill="#22a345">Y</text>
                  <circle cx="13" cy="65" r="3" fill="#2fc257" />
                </AxisGizmo>
              </Viewport>
            </Workspace>
            <TabBar>
              <PrinterTab type="button">
                AnyCubic Photon Mono M5s
                <svg width="4" height="16" viewBox="0 0 4 16"><path d="M1 1h2v2H1zM1 7h2v2H1zM1 13h2v2H1z" fill="#8a8b8a" /></svg>
              </PrinterTab>
              <IconButton type="button" aria-label="Add printer"><Plus /></IconButton>
            </TabBar>
          </Main>

          <Side>
            <SideTabs>
              <SideTab type="button" aria-label="Files" $active>
                <svg width="22" height="22" viewBox="0 0 22 22">
                  <path d="M0 0h12l5 5v2h-5c-4 0-6 4-4 8l2 5H0z" fill="#f0f1f0" />
                  <path d="M4 5h6M4 9h4M4 13h3M4 17h3" stroke="#1c1e1d" strokeWidth="1.500" />
                  <path d="M16 7l6 3.500v7L16 21l-6-3.500v-7z" fill="#f0f1f0" />
                  <circle cx="16" cy="14" r="2.500" fill="#1c1e1d" />
                </svg>
              </SideTab>
              <SideTab type="button" aria-label="Printer">
                <svg width="22" height="22" viewBox="0 0 22 22">
                  <path d="M3 4l13-4 2 6-13 4z" fill="#c9cac9" />
                  <path d="M17 5h4v15h1v2H0v-2h1V9l3-3v3l1 2-2 9h9V9h2v11h4V8z" fill="#c9cac9" />
                </svg>
              </SideTab>
            </SideTabs>
            <ListHead>
              <svg width="18" height="14" viewBox="0 0 18 14"><path d="M0 1h4M6 1h12M0 7h4M6 7h12M0 13h4M6 13h12" stroke="#d8d9d8" strokeWidth="2" /></svg>
              <ListTitle>File List</ListTitle>
            </ListHead>
            <ListTools>
              <Check aria-label="Select all" />
              <Spacer />
              <IconButton type="button" aria-label="Add file" $color="#9c9d9c">
                <svg width="18" height="18" viewBox="0 0 18 18" fill="none" stroke="currentColor" strokeWidth="1.500">
                  <path d="M1 1h16v12l-4 4H1zM9 5v8M5 9h8M12 16l1-3 4 0" />
                </svg>
              </IconButton>
              <IconButton type="button" aria-label="Measure" $color="#9c9d9c">
                <svg width="18" height="18" viewBox="0 0 18 18" fill="none" stroke="currentColor" strokeWidth="1.300">
                  <path d="M1 1h4v12h12v4H1zM3 4h2M3 7h2M3 10h2M8 15v2M11 15v2M14 15v2" />
                  <path d="M7 1h9v10" strokeDasharray="2 1" />
                </svg>
              </IconButton>
              <IconButton type="button" aria-label="Delete" $color="#9c9d9c">
                <svg width="16" height="18" viewBox="0 0 16 18" fill="none" stroke="currentColor" strokeWidth="1.500">
                  <path d="M0 3h16M5 3V1h6v2M2 3v14h12V3M6 7v6M10 7v6" />
                </svg>
              </IconButton>
            </ListTools>
            <FileArea>
              <FileRows>
                {files.map((f, i) => (
                  <FileRow key={f} $selected={i === 2}>
                    <Check id={f} defaultChecked={i === 2} />
                    <Eye />
                    <FileName htmlFor={f}>{f}</FileName>
                  </FileRow>
                ))}
              </FileRows>
              <ScrollThumb />
            </FileArea>
            <Detectors>
              {["Cavity Detector", "Collision Detector"].map((d) => (
                <Detector key={d}>
                  <DetectorLabel htmlFor={d}>{d}</DetectorLabel>
                  <Smile />
                  <Switch id={d} defaultChecked />
                </Detector>
              ))}
            </Detectors>
            <Actions>
              <ActionButton type="button">Slice Settings</ActionButton>
              <ActionButton type="button" $primary>Slice</ActionButton>
            </Actions>
          </Side>
        </Body>
        <StatusBar />
      </Window>
    </Frame>
  );
}
